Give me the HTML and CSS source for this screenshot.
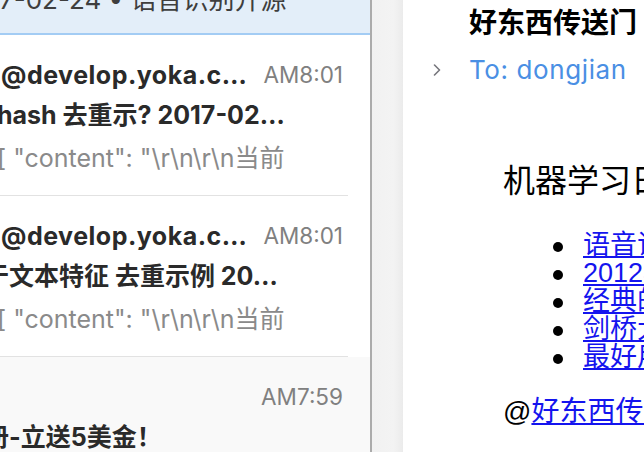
FILE: index.html
```html
<!DOCTYPE html>
<html lang="zh-CN">
<head>
<meta charset="utf-8">
<title>Mail</title>
<link rel="stylesheet" href="styles.css">
</head>
<body>
<div class="app">
  <section class="list">
    <div class="row row-selected">
      <div class="line preview-sel">7-02-24 • 语音识别开源</div>
    </div>
    <div class="row">
      <div class="row-inner">
        <div class="line head"><span class="sender">@develop.yoka.c…</span><span class="time">AM8:01</span></div>
        <div class="line subject cut-h">hash 去重示? 2017-02…</div>
        <div class="line preview cut-br">[ "content": "\r\n\r\n当前</div>
      </div>
    </div>
    <div class="row">
      <div class="row-inner">
        <div class="line head"><span class="sender">@develop.yoka.c…</span><span class="time">AM8:01</span></div>
        <div class="line subject cut-cjk">于文本特征 去重示例 20…</div>
        <div class="line preview cut-br">[ "content": "\r\n\r\n当前</div>
      </div>
    </div>
    <div class="row row-read">
      <div class="row-inner">
        <div class="line head"><span class="sender"></span><span class="time">AM7:59</span></div>
        <div class="line subject cut-cjk">册-立送5美金！</div>
      </div>
    </div>
  </section>
  <div class="gutter"></div>
  <main class="message">
    <header class="msg-header">
      <div class="title">好东西传送门</div>
      <div class="to">
        <svg class="chevron" width="8" height="12" viewBox="0 0 8 12"><polyline points="1.5,1 6.5,6 1.5,11" fill="none" stroke="#76767c" stroke-width="1.6" stroke-linecap="round" stroke-linejoin="round"/></svg>
        <span class="to-text">To: dongjian</span>
      </div>
    </header>
    <article class="msg-body">
      <h1 class="headline">机器学习日报 2017-02-24</h1>
      <ul class="links">
        <li><a href="#">语音识别开源项目</a></li>
        <li><a href="#">2012年ImageNet</a></li>
        <li><a href="#">经典的机器学习</a></li>
        <li><a href="#">剑桥大学课程</a></li>
        <li><a href="#">最好用的工具</a></li>
      </ul>
      <p class="sign">@<a href="#">好东西传送门</a></p>
    </article>
  </main>
</div>
</body>
</html>
```
FILE: styles.css
```css
html, body {
  margin: 0;
  padding: 0;
  width: 644px;
  height: 452px;
  overflow: hidden;
  background: #fff;
}

.app {
  display: flex;
  height: 452px;
}

.list {
  width: 372px;
  flex: none;
  box-sizing: border-box;
  border-right: 2px solid #ababab;
  background: #fff;
  display: flex;
  flex-direction: column;
  overflow: hidden;
  font-family: Inter, "Noto Sans CJK SC", sans-serif;
}

.row {
  flex: none;
}

.row-selected {
  box-sizing: border-box;
  height: 35px;
  background: #e3eef9;
  border-bottom: 2px solid #a3ccf4;
  display: flex;
  flex-direction: column;
  justify-content: flex-end;
  padding-bottom: 16px;
  overflow: hidden;
}

.row-read {
  background: #f9f9f9;
  flex: 1;
}

.row-inner {
  margin-right: 22px;
  padding: 23px 0 20px;
  border-bottom: 1px solid #e2e2e2;
}

.row-read .row-inner {
  border-bottom: none;
}

.line {
  height: 34px;
  line-height: 34px;
  white-space: nowrap;
  overflow: hidden;
}

.preview-sel {
  flex: none;
  font-size: 26px;
  color: #3e3e3e;
  text-indent: -1px;
}

.head {
  display: flex;
  justify-content: space-between;
  margin-bottom: 6px;
}

.sender {
  font-size: 25px;
  letter-spacing: 0.5px;
  font-weight: 700;
  color: #2a2a2a;
  padding-left: 1px;
}

.time {
  font-size: 22.5px;
  color: #808080;
  padding-right: 5px;
}

.subject {
  font-size: 25px;
  font-weight: 700;
  color: #2a2a2a;
  margin-bottom: 9px;
}

.preview {
  font-size: 25px;
  color: #8a8a8a;
}

.cut-h { text-indent: -3px; }
.cut-br { text-indent: -3px; }
.cut-cjk { text-indent: -16px; }

.gutter {
  width: 31px;
  flex: none;
  background: linear-gradient(to right, #f1f1f1 0%, #f3f3f3 70%, #ebebeb 100%);
}

.message {
  flex: 1;
  min-width: 0;
  overflow: hidden;
  background: #fff;
}

.msg-header {
  padding: 5px 0 0 30px;
  font-family: Inter, "Noto Sans CJK SC", sans-serif;
}

.title {
  margin-left: 36px;
  height: 36px;
  line-height: 36px;
  font-size: 28px;
  font-weight: 700;
  color: #000;
  white-space: nowrap;
}

.to {
  margin-top: 13px;
  display: flex;
  align-items: center;
  gap: 28px;
  height: 32px;
}

.chevron {
  flex: none;
}

.to-text {
  font-size: 26px;
  letter-spacing: 0.6px;
  line-height: 32px;
  color: #4a8fe4;
  white-space: nowrap;
}

.msg-body {
  padding: 75px 0 0 100px;
  font-family: "Liberation Sans", "Noto Sans CJK SC", sans-serif;
  color: #000;
  white-space: nowrap;
}

.headline {
  margin: 0;
  font-size: 32px;
  font-weight: 400;
  line-height: 40px;
}

.links {
  margin: 30px 0 0;
  padding-left: 80px;
  list-style: none;
  font-size: 27px;
  line-height: 28px;
}

.links li {
  display: flex;
  align-items: center;
  height: 28px;
}

.links li::before {
  content: "";
  flex: none;
  width: 10px;
  height: 10px;
  border-radius: 50%;
  background: #000;
  margin: 4px 20px 0 -30px;
}

.links a, .sign a {
  color: #1414ee;
}

.sign {
  margin: 25px 0 0;
  font-size: 28px;
  line-height: 32px;
}
```
